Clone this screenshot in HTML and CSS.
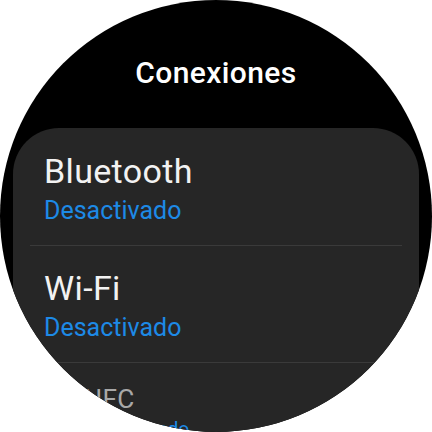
FILE: index.html
```html
<!DOCTYPE html>
<html lang="es">
<head>
<meta charset="utf-8">
<link rel="stylesheet" href="styles.css">
</head>
<body>
<div class="watch">
  <h1 class="title">Conexiones</h1>
  <div class="card">
    <div class="item">
      <div class="name">Bluetooth</div>
      <div class="state">Desactivado</div>
    </div>
    <div class="item">
      <div class="name">Wi-Fi</div>
      <div class="state">Desactivado</div>
    </div>
    <div class="item item-edge">
      <div class="name name-dim">NFC</div>
      <div class="state">Desactivado</div>
    </div>
  </div>
</div>
</body>
</html>
```

FILE: styles.css
```css
html, body {
  margin: 0;
  padding: 0;
  background: #ffffff;
}
.watch {
  width: 432px;
  height: 432px;
  border-radius: 50%;
  overflow: hidden;
  background: #000000;
  font-family: Roboto, "Noto Sans", sans-serif;
}
.title {
  margin: 0;
  padding-top: 53px;
  height: 128px;
  box-sizing: border-box;
  font-size: 30px;
  line-height: 40px;
  font-weight: 500;
  letter-spacing: 0.4px;
  color: #ffffff;
  text-align: center;
}
.card {
  margin: 0 13px;
  padding-top: 1px;
  height: 400px;
  background: #262626;
  border-radius: 46px;
}
.item {
  margin: 0 17px;
  padding: 22px 0 19px 14px;
  border-bottom: 1px solid #3a3a3a;
}
.name {
  font-size: 34px;
  line-height: 40px;
  letter-spacing: 0.35px;
  color: #f2f2f2;
}
.state {
  margin-top: 5px;
  font-size: 25px;
  line-height: 30px;
  color: #1d8ae6;
}
.item-edge {
  border-bottom: none;
  transform: scale(0.77);
  transform-origin: 186px 0;
  padding-top: 26px;
}
.name-dim {
  color: #a8a8a8;
}
```
